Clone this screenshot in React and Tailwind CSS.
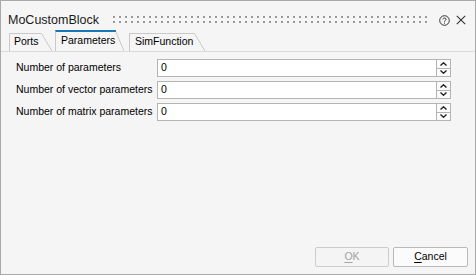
import React from "react";

const tabs = [
  { label: "Ports", w: "w-[32px]", active: false },
  { label: "Parameters", w: "w-[60px]", active: true },
  { label: "SimFunction", w: "w-[65px]", active: false },
];

const rows = ["Number of parameters", "Number of vector parameters", "Number of matrix parameters"];

function Spinner() {
  return (
    <div className="w-[14px] h-[18px] flex flex-col border-y border-r border-[#b4b4b4] bg-[#fbfbfb]">
      <div className="flex-1 flex items-center justify-center border-b border-[#b4b4b4]">
        <svg width="7" height="4" viewBox="0 0 7 4">
          <path d="M0.5 3.5 L3.5 0.8 L6.5 3.5" stroke="#222" strokeWidth="1.4" fill="none" />
        </svg>
      </div>
      <div className="flex-1 flex items-center justify-center">
        <svg width="7" height="4" viewBox="0 0 7 4">
          <path d="M0.5 0.5 L3.5 3.2 L6.5 0.5" stroke="#222" strokeWidth="1.4" fill="none" />
        </svg>
      </div>
    </div>
  );
}

export default function App() {
  return (
    <div className="w-[476px] h-[275px] bg-[#f5f5f5] border border-[#a9a9a9] flex flex-col text-black font-['Liberation_Sans',Arial,sans-serif]">
      {/* title bar */}
      <div className="h-[29px] flex items-center pt-[9px] pl-[7px] pr-[9px] shrink-0">
        <span className="text-[12.5px] leading-none text-[#1a1a1a]">MoCustomBlock</span>
        <svg className="flex-1 ml-[14px] mr-[10px] h-[8px]" height="8">
          <defs>
            <pattern id="grip" width="6" height="8" patternUnits="userSpaceOnUse">
              <rect x="0" y="0" width="2" height="2" fill="#9a9a9a" />
              <rect x="0" y="5" width="2" height="2" fill="#9a9a9a" />
            </pattern>
          </defs>
          <rect width="100%" height="8" fill="url(#grip)" />
        </svg>
        <svg width="11" height="11" viewBox="0 0 11 11">
          <circle cx="5.5" cy="5.5" r="4.8" stroke="#333" strokeWidth="1" fill="none" />
          <path d="M3.9 4.4 C3.9 2.6 7.1 2.6 7.1 4.3 C7.1 5.4 5.5 5.4 5.5 6.6" stroke="#333" strokeWidth="1" fill="none" />
          <rect x="5" y="7.6" width="1" height="1" fill="#333" />
        </svg>
        <svg className="ml-[6px]" width="10" height="10" viewBox="0 0 10 10">
          <path d="M0.8 0.8 L9.2 9.2 M9.2 0.8 L0.8 9.2" stroke="#333" strokeWidth="1.1" />
        </svg>
      </div>

      {/* tabs */}
      <div className="h-[21px] flex items-end pl-[8px] shrink-0">
        {tabs.map((t, i) => (
          <div key={t.label} className={`flex ${t.active ? "h-[21px] mr-[5px]" : "h-[18px] mr-[3px]"}`}>
            <div
              className={`${t.w} flex items-center border-l border-[#c9c9c9] text-[10.5px] ${
                t.active ? "border-t-2 border-t-[#1a78b8] pl-[5px] pb-[1px]" : "border-t pl-[4px] pb-[1px]"
              } ${i === 2 ? "pl-[5px]" : ""}`}
            >
              {t.label}
            </div>
            <svg width={t.active ? 9 : 11} height={t.active ? 21 : 18}>
              {t.active ? (
                <>
                  <path d="M0 1 H1" stroke="#1a78b8" strokeWidth="2" />
                  <path d="M1 2 L9 21" stroke="#c9c9c9" fill="none" />
                </>
              ) : (
                <path d="M0 0.5 H0.5 L11 18" stroke="#c9c9c9" fill="none" />
              )}
            </svg>
          </div>
        ))}
      </div>

      {/* panel */}
      <div className="flex-1 border-t border-[#dadada] pt-[7px] pl-[15px] pr-[24px] flex flex-col">
        <div className="grid grid-cols-[141px_1fr] gap-y-[4px]">
          {rows.map((r) => (
            <React.Fragment key={r}>
              <div className="h-[18px] flex items-center text-[10.5px] pb-[1px]">{r}</div>
              <div className="h-[18px] flex">
                <div className="flex-1 border border-[#b4b4b4] bg-white pl-[3px] flex items-center text-[10.5px]">0</div>
                <Spinner />
              </div>
            </React.Fragment>
          ))}
        </div>

        <div className="mt-auto flex justify-end gap-[4px] pb-[7px] mr-[-17px]">
          <button className="w-[74px] h-[20px] border border-[#cccccc] bg-[#f4f4f4] rounded-[2px] text-[10.5px] text-[#a3a3a3]">
            <span className="underline underline-offset-2">O</span>K
          </button>
          <button className="w-[75px] h-[20px] border border-[#b9b9b9] bg-[#fbfbfb] rounded-[2px] text-[10.5px] text-black">
            <span className="underline underline-offset-2">C</span>ancel
          </button>
        </div>
      </div>
    </div>
  );
}
